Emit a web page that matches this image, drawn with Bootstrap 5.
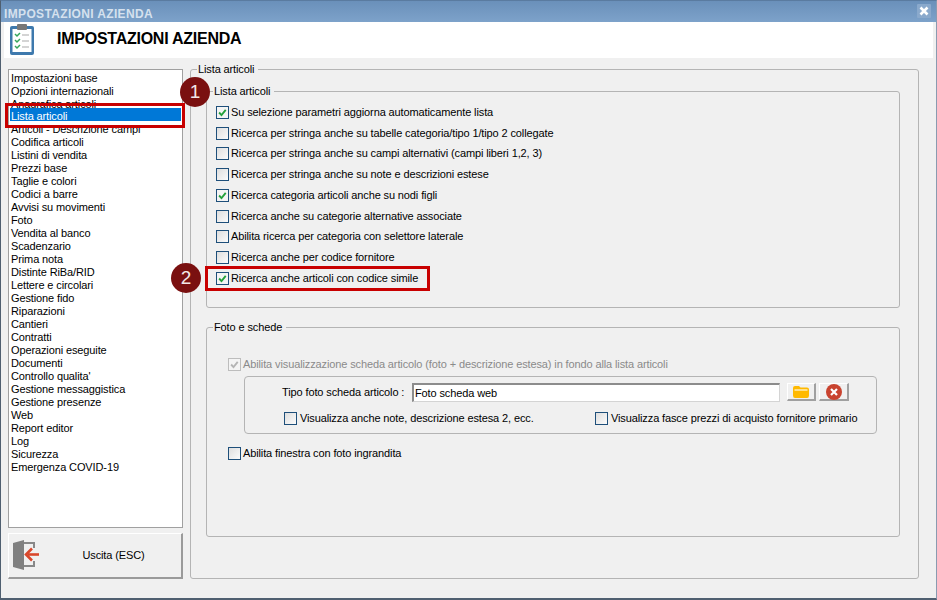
<!DOCTYPE html>
<html lang="it">
<head>
<meta charset="utf-8">
<title>Impostazioni azienda</title>
<link href="https://cdn.jsdelivr.net/npm/bootstrap@5.3.0/dist/css/bootstrap.min.css" rel="stylesheet">
<style>
html,body{margin:0;height:600px;overflow:hidden;background:#f0f0f0}
body{font-family:"Liberation Sans",Arial,sans-serif;font-size:11px;line-height:13px;color:#000;letter-spacing:-.12px}
.app-win{width:937px;height:600px;background:#f0f0f0;border-left:1px solid #4f5f70;border-bottom:2px solid #4f5f70;border-right:1px solid #8a9bb0;border-top:1px solid #5a7ba0;padding:0 3px}
.app-title{height:21px;margin:0 -3px;padding:3px 3px 0;background:linear-gradient(#6a90ba,#7da2ca);color:#d5e1ee;font-weight:700;font-size:12px;letter-spacing:.35px}
.app-title>span{margin-top:4px}
.close-x{width:14px;height:14px;display:block;margin:-3px 2px 0 0}
.app-head{height:36px;background:#fff;padding:0 0 0 6px}
.head-text{font-weight:700;font-size:16px;margin-left:23px;letter-spacing:-.25px;margin-top:-2px}
.app-main{height:541px;position:relative;padding:5px 0 0 4px}
.left-col{width:175px;padding-top:6px}
.side-list{height:459px;border:1px solid #a0a0a0;background:#fff;padding-top:0;position:relative;border-radius:0}
.side-list .list-group-item{border:0;background:none;padding:2px 0 0 1px;font-size:inherit;line-height:12px;height:13px;color:#000;margin:0 1px;white-space:nowrap;border-radius:0}
.side-list .list-group-item.active{background:#0078d7;color:#fff}
.red-frame{position:absolute;border:3px solid #c80000;pointer-events:none}
.rf-list{left:-4px;top:33px;width:180px;height:25px}
.rf-check{left:-2px;top:168px;width:225px;height:25px}
.num-dot{position:absolute;width:30px;height:30px;border-radius:50%;background:#7a1010;color:#f4e8e8;font-size:19px;line-height:29px;text-align:center;letter-spacing:0}
.nd-1{left:-27px;top:-21px}
.nd-2{left:-36px;top:165px}
.uscita-btn{margin-top:5px;width:175px;height:46px;background:#f0f0f0;border:1px solid;border-color:#fff #9a9a9a #9a9a9a #fff;border-width:1px 2px 2px 1px;border-radius:0;font-size:11px;letter-spacing:-.12px;color:#000;padding:0 0 0 37px;position:relative;box-shadow:none}
.uscita-btn svg{position:absolute;left:3px;top:5px}
.box-f{border:1px solid #b4b4b4;border-radius:3px;padding:0;margin:0;min-width:0}
.box-f>legend{float:none;width:auto;font-size:inherit;line-height:13px;margin:0;padding:0 4px 0 1px}
.f-outer{width:729px;height:516px;padding:9px 0 0 15px}
.f-outer>legend{margin-left:-9px}
.f-inner{width:694px;position:relative}
.f-a{height:223px;padding:4px 0 0 9px}
.f-a>legend{margin-left:-3px}
.f-b{height:216px;margin-top:13px;padding:0}
.f-b>legend{margin-left:6px}
.chk-row{height:20.75px;display:flex;align-items:center;gap:2px;white-space:nowrap}
.tick{appearance:none;-webkit-appearance:none;width:13px;height:13px;margin:0;flex:none;border:1px solid #1e4f7a;border-radius:0;background:#f4f4f4 linear-gradient(135deg,#dedede,#fbfbfb);float:none}
.tick:checked{background-color:#f4f4f4;border-color:#1e4f7a;background-image:url("data:image/svg+xml,%3Csvg xmlns='http://www.w3.org/2000/svg' viewBox='0 0 13 13'%3E%3Cpath d='M2.500 6.500l2.800 3 5-6' fill='none' stroke='%2323a03a' stroke-width='2.2'/%3E%3C/svg%3E")}
.tick:disabled{opacity:1;border-color:#bdbdbd}
.tick:disabled:checked{background-image:url("data:image/svg+xml,%3Csvg xmlns='http://www.w3.org/2000/svg' viewBox='0 0 13 13'%3E%3Cpath d='M2.500 6.500l2.800 3 5-6' fill='none' stroke='%23b4b4b4' stroke-width='2.2'/%3E%3C/svg%3E")}
.dim{color:#8a8a8a}
.row-dis{margin:24px 0 0 21px;height:14px}
.sub-box{margin:4px 0 0 37px;width:633px;height:58px;border:1px solid #b4b4b4;border-radius:4px;padding:6px 0 0 37px}
.sub-label{width:130px;white-space:nowrap}
.sub-input{width:368px;height:19px;padding:0 1px;border-radius:0;font-size:11px;line-height:13px;letter-spacing:inherit;border:1px solid #d4d4d4;border-top:2px solid #8c8c8c;border-left:2px solid #8c8c8c;color:#000;font-family:inherit;box-shadow:none;flex:none}
.tool-btn{width:29px;height:18px;padding:0;background:#f0f0f0;border:1px solid;border-color:#fff #a0a0a0 #a0a0a0 #fff;border-width:1px 2px 2px 1px;border-radius:0;display:flex;align-items:center;justify-content:center;flex:none}
.t-first{margin-left:7px}
.t-second{margin-left:3px;width:30px}
.sub-checks{margin:10px 0 0 2px;width:580px}
.sub-checks .chk-row{height:13px;gap:3px}
.c-one{width:311px}
.row-big{margin:13px 0 0 21px;height:14px}
.right-col{margin-left:7px}
</style>
</head>
<body>
<div class="app-win d-flex flex-column">
  <div class="app-title d-flex justify-content-between align-items-center">
    <span>IMPOSTAZIONI AZIENDA</span>
    <svg class="close-x" viewBox="0 0 14 14"><rect width="14" height="14" rx="1" fill="#8aa9cc"/><path d="M3.500 3.500l7 7M10.500 3.500l-7 7" stroke="#fff" stroke-width="2.600"/></svg>
  </div>
  <div class="app-head d-flex align-items-center">
    <svg width="24" height="31" viewBox="0 0 24 31"><rect x="0" y="2" width="24" height="29" rx="2" fill="#3e79ad"/><rect x="2.500" y="5" width="19" height="23" fill="#fff"/><rect x="7" y="0" width="10" height="6" rx="1" fill="#777"/><path d="M5 10l2 2 3-3M5 16l2 2 3-3M5 22l2 2 3-3" fill="none" stroke="#35a65a" stroke-width="1.500"/><path d="M12 11h7M12 17h7M12 23h7" stroke="#aaa" stroke-width="1.200"/></svg>
    <span class="head-text">IMPOSTAZIONI AZIENDA</span>
  </div>
  <div class="app-main d-flex">
    <div class="left-col">
      <div class="side-list list-group">
        <div class="list-group-item">Impostazioni base</div>
        <div class="list-group-item">Opzioni internazionali</div>
        <div class="list-group-item">Anagrafica articoli</div>
        <div class="list-group-item active">Lista articoli</div>
        <div class="list-group-item">Articoli - Descrizione campi</div>
        <div class="list-group-item">Codifica articoli</div>
        <div class="list-group-item">Listini di vendita</div>
        <div class="list-group-item">Prezzi base</div>
        <div class="list-group-item">Taglie e colori</div>
        <div class="list-group-item">Codici a barre</div>
        <div class="list-group-item">Avvisi su movimenti</div>
        <div class="list-group-item">Foto</div>
        <div class="list-group-item">Vendita al banco</div>
        <div class="list-group-item">Scadenzario</div>
        <div class="list-group-item">Prima nota</div>
        <div class="list-group-item">Distinte RiBa/RID</div>
        <div class="list-group-item">Lettere e circolari</div>
        <div class="list-group-item">Gestione fido</div>
        <div class="list-group-item">Riparazioni</div>
        <div class="list-group-item">Cantieri</div>
        <div class="list-group-item">Contratti</div>
        <div class="list-group-item">Operazioni eseguite</div>
        <div class="list-group-item">Documenti</div>
        <div class="list-group-item">Controllo qualita'</div>
        <div class="list-group-item">Gestione messaggistica</div>
        <div class="list-group-item">Gestione presenze</div>
        <div class="list-group-item">Web</div>
        <div class="list-group-item">Report editor</div>
        <div class="list-group-item">Log</div>
        <div class="list-group-item">Sicurezza</div>
        <div class="list-group-item">Emergenza COVID-19</div>
        <div class="red-frame rf-list"></div>
      </div>
      <button type="button" class="btn uscita-btn">
        <svg width="30" height="32" viewBox="0 0 30 32"><path d="M11 4h11v5M22 22v5H11" fill="none" stroke="#888" stroke-width="2"/><path d="M1 4l11-3v30L1 28z" fill="#808080"/><path d="M27 15.500H16" stroke="#d9472b" stroke-width="2.600"/><path d="M20 9.500l-6 6 6 6" fill="none" stroke="#d9472b" stroke-width="2.600"/></svg>
        Uscita (ESC)
      </button>
    </div>
    <div class="right-col">
      <fieldset class="box-f f-outer">
        <legend>Lista articoli</legend>
        <fieldset class="box-f f-inner f-a">
          <legend>Lista articoli</legend>
          <label class="chk-row"><input class="tick" type="checkbox" checked><span>Su selezione parametri aggiorna automaticamente lista</span></label>
          <label class="chk-row"><input class="tick" type="checkbox"><span>Ricerca per stringa anche su tabelle categoria/tipo 1/tipo 2 collegate</span></label>
          <label class="chk-row"><input class="tick" type="checkbox"><span>Ricerca per stringa anche su campi alternativi (campi liberi 1,2, 3)</span></label>
          <label class="chk-row"><input class="tick" type="checkbox"><span>Ricerca per stringa anche su note e descrizioni estese</span></label>
          <label class="chk-row"><input class="tick" type="checkbox" checked><span>Ricerca categoria articoli anche su nodi figli</span></label>
          <label class="chk-row"><input class="tick" type="checkbox"><span>Ricerca anche su categorie alternative associate</span></label>
          <label class="chk-row"><input class="tick" type="checkbox"><span>Abilita ricerca per categoria con selettore laterale</span></label>
          <label class="chk-row"><input class="tick" type="checkbox"><span>Ricerca anche per codice fornitore</span></label>
          <label class="chk-row"><input class="tick" type="checkbox" checked><span>Ricerca anche articoli con codice simile</span></label>
          <div class="num-dot nd-1">1</div>
          <div class="num-dot nd-2">2</div>
          <div class="red-frame rf-check"></div>
        </fieldset>
        <fieldset class="box-f f-inner f-b">
          <legend>Foto e schede</legend>
          <label class="chk-row row-dis dim"><input class="tick" type="checkbox" checked disabled><span>Abilita visualizzazione scheda articolo (foto + descrizione estesa) in fondo alla lista articoli</span></label>
          <div class="sub-box">
            <div class="d-flex align-items-center">
              <span class="sub-label">Tipo foto scheda articolo :</span>
              <input class="form-control sub-input" type="text" value="Foto scheda web">
              <button type="button" class="btn tool-btn t-first"><svg width="16" height="12" viewBox="0 0 16 12"><path d="M0 2q0-2 2-2h4l1.500 1.500H14q2 0 2 2v6q0 2.500-2 2.500H2q-2 0-2-2.500z" fill="#ffb900"/><path d="M1.500 3h13v2h-13z" fill="#ffe08a"/></svg></button>
              <button type="button" class="btn tool-btn t-second"><svg width="16" height="16" viewBox="0 0 16 16"><circle cx="8" cy="8" r="8" fill="#c9432f"/><path d="M5 5l6 6M11 5l-6 6" stroke="#fff" stroke-width="2.200"/></svg></button>
            </div>
            <div class="sub-checks d-flex">
              <label class="chk-row c-one"><input class="tick" type="checkbox"><span>Visualizza anche note, descrizione estesa 2, ecc.</span></label>
              <label class="chk-row"><input class="tick" type="checkbox"><span>Visualizza fasce prezzi di acquisto fornitore primario</span></label>
            </div>
          </div>
          <label class="chk-row row-big"><input class="tick" type="checkbox"><span>Abilita finestra con foto ingrandita</span></label>
        </fieldset>
      </fieldset>
    </div>
  </div>
</div>
</body>
</html>
